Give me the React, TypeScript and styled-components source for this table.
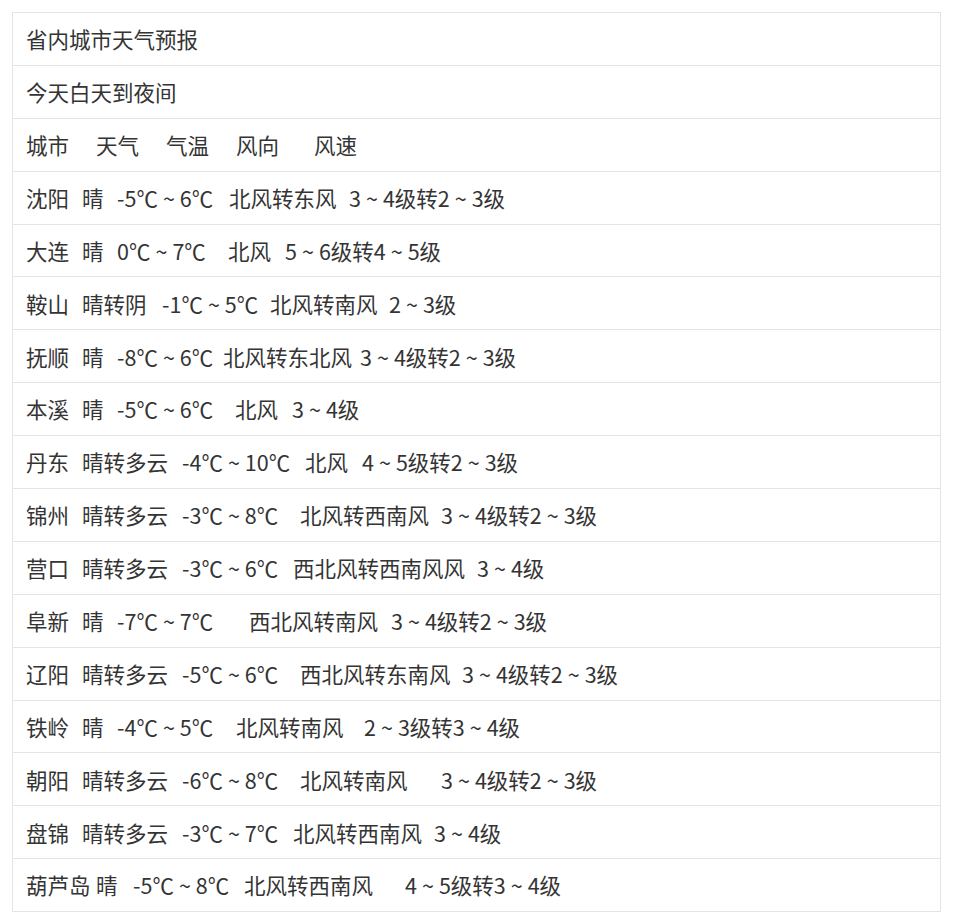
import React from "react";
import styled, { createGlobalStyle } from "styled-components";

const GlobalStyle = createGlobalStyle`
  html, body {
    margin: 0;
    padding: 0;
    background: #ffffff;
  }
  body {
    font-family: "Noto Sans CJK SC", "Noto Sans", sans-serif;
  }
`;

const Page = styled.div`
  padding: 12px 19px 12px 12px;
`;

const Table = styled.div`
  display: flex;
  flex-direction: column;
  width: 929px;
  box-sizing: border-box;
  border: 1px solid #e4e4e4;
  border-bottom: none;
  background: #ffffff;
`;

const Row = styled.div`
  display: flex;
  align-items: center;
  height: 52.9px;
  box-sizing: border-box;
  padding-left: 13px;
  border-bottom: 1px solid #e4e4e4;
  font-family: "Noto Sans CJK SC", "Noto Sans", sans-serif;
  font-size: 21.5px;
  color: #343434;
  white-space: nowrap;
`;

const Cell = styled.span<{ $w?: number }>`
  flex: 0 0 auto;
  min-width: ${(p) => (p.$w ? `${p.$w}px` : "0")};
  line-height: 1;
`;

const Tilde = styled.span`
  margin: 0 5px;
`;

type Seg = [string, number?];

const rows: Seg[][] = [
  [["省内城市天气预报"]],
  [["今天白天到夜间"]],
  [["城市", 70], ["天气", 70], ["气温", 70], ["风向", 78], ["风速"]],
  [["沈阳", 56], ["晴", 35], ["-5℃~6℃", 112], ["北风转东风", 120], ["3~4级转2~3级"]],
  [["大连", 56], ["晴", 35], ["0℃~7℃", 111], ["北风", 57], ["5~6级转4~5级"]],
  [["鞍山", 56], ["晴转阴", 80], ["-1℃~5℃", 108], ["北风转南风", 119], ["2~3级"]],
  [["抚顺", 56], ["晴", 35], ["-8℃~6℃", 106], ["北风转东北风", 137], ["3~4级转2~3级"]],
  [["本溪", 56], ["晴", 35], ["-5℃~6℃", 118], ["北风", 57], ["3~4级"]],
  [["丹东", 56], ["晴转多云", 100], ["-4℃~10℃", 123], ["北风", 57], ["4~5级转2~3级"]],
  [["锦州", 56], ["晴转多云", 100], ["-3℃~8℃", 118], ["北风转西南风", 141], ["3~4级转2~3级"]],
  [["营口", 56], ["晴转多云", 100], ["-3℃~6℃", 111], ["西北风转西南风风", 184], ["3~4级"]],
  [["阜新", 56], ["晴", 35], ["-7℃~7℃", 132], ["西北风转南风", 142], ["3~4级转2~3级"]],
  [["辽阳", 56], ["晴转多云", 100], ["-5℃~6℃", 118], ["西北风转东南风", 162], ["3~4级转2~3级"]],
  [["铁岭", 56], ["晴", 35], ["-4℃~5℃", 119], ["北风转南风", 128], ["2~3级转3~4级"]],
  [["朝阳", 56], ["晴转多云", 100], ["-6℃~8℃", 118], ["北风转南风", 141], ["3~4级转2~3级"]],
  [["盘锦", 56], ["晴转多云", 100], ["-3℃~7℃", 111], ["北风转西南风", 141], ["3~4级"]],
  [["葫芦岛", 70], ["晴", 37], ["-5℃~8℃", 111], ["北风转西南风", 161], ["4~5级转3~4级"]],
];

function renderText(text: string) {
  const parts = text.split("~");
  return parts.map((part, k) => (
    <React.Fragment key={k}>
      {k > 0 && <Tilde>~</Tilde>}
      {part}
    </React.Fragment>
  ));
}

export default function App() {
  return (
    <>
      <GlobalStyle />
      <Page>
        <Table>
          {rows.map((segs, i) => (
            <Row key={i}>
              {segs.map(([text, w], j) => (
                <Cell key={j} $w={w}>
                  {renderText(text)}
                </Cell>
              ))}
            </Row>
          ))}
        </Table>
      </Page>
    </>
  );
}
